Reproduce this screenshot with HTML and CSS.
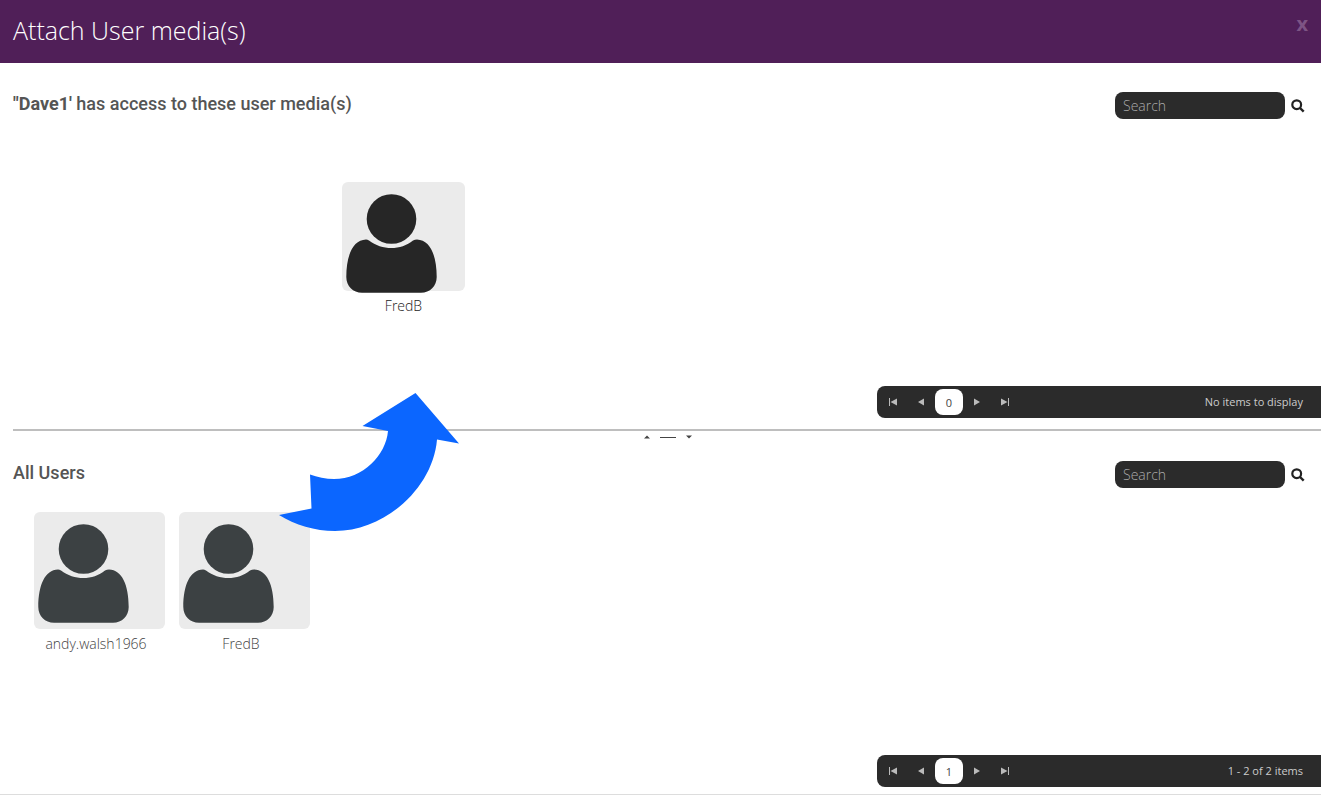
FILE: index.html
```html
<!DOCTYPE html>
<html lang="en">
<head>
<meta charset="utf-8">
<meta name="viewport" content="width=device-width, initial-scale=1">
<title>Attach User media(s)</title>
<link rel="stylesheet" href="styles.css">
</head>
<body>
<svg class="symbols" aria-hidden="true">
  <symbol id="person" viewBox="0 0 91 99">
    <circle cx="45.500" cy="25" r="24.800"/>
    <path d="M20 45.500Q21.500 45.500 23 46.500C36 56.500 55 56.500 67 46.500Q69 45.500 71 45.500C84 46 90.700 61 90.700 83C90.700 92 84 98.800 75 98.800H16C7 98.800 0.300 92 0.300 83C0.300 61 7 46 20 45.500Z"/>
  </symbol>
  <symbol id="search" viewBox="0 0 14 14">
    <circle cx="5.700" cy="5.700" r="4.400" fill="none" stroke="currentColor" stroke-width="2.200"/>
    <path d="M9 9L12.700 12.700" stroke="currentColor" stroke-width="2.400" stroke-linecap="butt"/>
  </symbol>
  <symbol id="prev" viewBox="0 0 8 8"><path d="M7 0.500V7.500L1 4Z"/></symbol>
  <symbol id="next" viewBox="0 0 8 8"><path d="M1 0.500V7.500L7 4Z"/></symbol>
  <symbol id="first" viewBox="0 0 8 8"><path d="M0 0H1V8H0ZM8 0.500V7.500L1.500 4Z"/></symbol>
  <symbol id="last" viewBox="0 0 8 8"><path d="M7 0H8V8H7ZM0 0.500V7.500L6.500 4Z"/></symbol>
</svg>
<div class="page">
  <header class="header">
    <h1 class="title">Attach User media(s)</h1>
    <button class="close" type="button" aria-label="Close">x</button>
  </header>

  <section class="panel">
    <div class="toolbar">
      <h2 class="heading"><strong>"Dave1'</strong> has access to these user media(s)</h2>
      <form class="search">
        <input class="search-input" type="text" placeholder="Search" aria-label="Search user media">
        <button class="search-button" type="button" aria-label="Search"><svg><use href="#search"/></svg></button>
      </form>
    </div>
    <ul class="cards cards-attached">
      <li class="card card-dragged">
        <div class="thumb"><svg class="avatar"><use href="#person"/></svg></div>
        <span class="name">FredB</span>
      </li>
    </ul>
    <nav class="pager" aria-label="Attached media pages">
      <button class="page-button" type="button" aria-label="First page"><svg><use href="#first"/></svg></button>
      <button class="page-button" type="button" aria-label="Previous page"><svg><use href="#prev"/></svg></button>
      <button class="page-button current" type="button">0</button>
      <button class="page-button" type="button" aria-label="Next page"><svg><use href="#next"/></svg></button>
      <button class="page-button" type="button" aria-label="Last page"><svg><use href="#last"/></svg></button>
      <span class="pager-info">No items to display</span>
    </nav>
  </section>

  <section class="panel panel-all">
    <div class="splitter">
      <svg class="splitter-handle" viewBox="0 0 48 4" aria-hidden="true">
        <path d="M0 3.500L3 0.500L6 3.500ZM16 2H32V3H16ZM42 0.500H48L45 3.500Z"/>
      </svg>
    </div>
    <div class="toolbar">
      <h2 class="heading">All Users</h2>
      <form class="search">
        <input class="search-input" type="text" placeholder="Search" aria-label="Search all users">
        <button class="search-button" type="button" aria-label="Search"><svg><use href="#search"/></svg></button>
      </form>
    </div>
    <ul class="cards">
      <li class="card">
        <div class="thumb"><svg class="avatar"><use href="#person"/></svg></div>
        <span class="name">andy.walsh1966</span>
      </li>
      <li class="card">
        <div class="thumb"><svg class="avatar"><use href="#person"/></svg></div>
        <span class="name">FredB</span>
      </li>
    </ul>
    <nav class="pager" aria-label="All users pages">
      <button class="page-button" type="button" aria-label="First page"><svg><use href="#first"/></svg></button>
      <button class="page-button" type="button" aria-label="Previous page"><svg><use href="#prev"/></svg></button>
      <button class="page-button current" type="button">1</button>
      <button class="page-button" type="button" aria-label="Next page"><svg><use href="#next"/></svg></button>
      <button class="page-button" type="button" aria-label="Last page"><svg><use href="#last"/></svg></button>
      <span class="pager-info">1 - 2 of 2 items</span>
    </nav>
    <svg class="drag-arrow" viewBox="0 0 180 138" aria-hidden="true">
      <path d="M136.500 0L83.500 33L109 38C107 62 84 86 55 86C47 86 38 84 31 81.500L32.500 115.500L0 122C16 132 36 138 56 138C106 138 154 95 158 46.500L180 50.500Z"/>
    </svg>
  </section>
</div>
</body>
</html>
```
FILE: styles.css
```css
* { box-sizing: border-box; }

body {
  margin: 0;
  background: #fff;
  color: #555;
  font-family: "Open Sans", "Noto Sans", sans-serif;
}

button {
  padding: 0;
  border: 0;
  background: none;
  font: inherit;
  cursor: pointer;
}

.symbols { position: absolute; width: 0; height: 0; }

.page {
  display: grid;
  grid-template-rows: auto 1fr 1fr;
  min-height: 100vh;
  padding-bottom: 6px;
}

.header {
  display: flex;
  justify-content: space-between;
  align-items: flex-start;
  min-height: 63px;
  padding: 12px 13px 15px;
  background: #501f58;
}

.title {
  margin: 0;
  color: #fff;
  font-size: 25px;
  font-weight: 300;
  line-height: 36px;
}

.close {
  color: #7d5484;
  font-size: 20px;
  font-weight: 700;
  line-height: 24px;
}

.panel {
  display: flex;
  flex-direction: column;
  padding: 29px 0 11px;
}

.panel-all {
  position: relative;
  padding: 0 0 7px;
  border-bottom: 1px solid #ddd;
}

.splitter {
  display: flex;
  justify-content: center;
  height: 14px;
  margin: 0 0 18px 13px;
  padding: 4px 0 0 2px;
  border-top: 2px solid #bebebe;
}

.splitter-handle { width: 48px; height: 4px; fill: #444; }

.toolbar {
  display: flex;
  justify-content: space-between;
  align-items: flex-start;
  padding: 0 16px 0 13px;
}

.heading {
  margin: 0;
  font-family: Roboto, "Open Sans", sans-serif;
  font-size: 18px;
  font-weight: 500;
  line-height: 24px;
}

.search { display: flex; align-items: center; gap: 6px; }

.search-input {
  width: 170px;
  height: 27px;
  padding: 0 8px;
  border: 0;
  border-radius: 8px;
  background: #2b2b2b;
  color: #fff;
  font: 300 14px/20px "Open Sans", "Noto Sans", sans-serif;
}

.search-input::placeholder { color: #aaa; opacity: 1; }

.search-button { display: flex; color: #222; }
.search-button svg { width: 14px; height: 14px; }

.cards {
  display: flex;
  flex-wrap: wrap;
  gap: 14px;
  margin: 24px 0 0;
  padding: 0 34px;
  list-style: none;
}

.cards-attached { margin-top: 63px; padding-left: 342px; }

.card { width: 131px; color: #444; text-align: center; }

.thumb {
  display: flex;
  height: 117px;
  padding: 12px 4px;
  border-radius: 6px;
  background: #ebebeb;
}

.avatar { flex: none; width: 91px; height: 99px; fill: #3c4143; }

.card-dragged { width: 123px; color: #222; }
.card-dragged .thumb { height: 109px; }
.card-dragged .avatar { fill: #262626; }

.name {
  display: block;
  margin-top: 5px;
  padding-right: 7px;
  font-size: 14px;
  font-weight: 300;
  line-height: 20px;
}

.card-dragged .name { padding-right: 0; }

.pager {
  display: flex;
  align-items: center;
  align-self: flex-end;
  width: 444px;
  max-width: 100%;
  height: 32px;
  margin-top: auto;
  padding: 0 18px 0 2px;
  border-radius: 8px 0 0 8px;
  background: #2b2b2b;
  color: #ccc;
  font-size: 11px;
}

.page-button {
  display: flex;
  justify-content: center;
  align-items: center;
  width: 28px;
  height: 26px;
}

.page-button svg { width: 8px; height: 8px; fill: #bbb; }

.page-button.current {
  border-radius: 8px;
  background: #fff;
  color: #444;
}

.pager-info { margin-left: auto; padding-bottom: 2px; }

.drag-arrow {
  position: absolute;
  top: -36px;
  left: 279px;
  width: 180px;
  height: 138px;
  fill: #0b66ff;
}
```
